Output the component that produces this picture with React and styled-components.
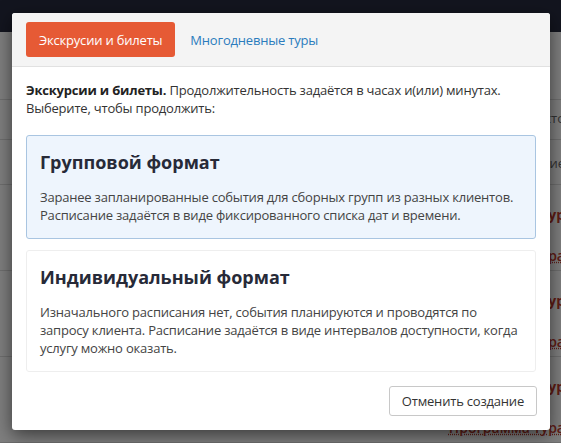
import React from 'react';
import styled, { createGlobalStyle } from 'styled-components';

const GlobalStyle = createGlobalStyle`
  html, body {
    margin: 0;
    padding: 0;
    overflow: hidden;
    font-family: "Open Sans", "Liberation Sans", sans-serif;
  }
  #root {
    height: 443px;
  }
`;

/* the page that sits behind the dialog */
const Page = styled.div`
  position: relative;
  width: 561px;
  height: 443px;
  overflow: hidden;
  background: #fff;
`;

const Nav = styled.div`
  height: 32px;
  background: #272a3e;
`;

const Toolbar = styled.div`
  height: 67px;
  border-bottom: 1px solid #dcdcdc;
`;

const Table = styled.div`
  display: flex;
  flex-direction: column;
`;

const Row = styled.div`
  display: grid;
  grid-template-columns: 1fr 150px;
  align-items: start;
  height: ${(p) => p.$h}px;
  border-bottom: 1px solid #dcdcdc;
  box-sizing: border-box;
`;

const HeadCell = styled.div`
  grid-column: 2;
  padding-top: ${(p) => p.$top}px;
  text-align: right;
  margin-right: -4px;
  font-size: 13px;
  color: #666;
  white-space: nowrap;
`;

const LinkCell = styled.div`
  grid-column: 2;
  display: flex;
  flex-direction: column;
  align-items: flex-end;
  gap: 22px;
  padding-top: 20px;
  margin-right: -4px;
  white-space: nowrap;
`;

const TourName = styled.span`
  font-size: 14px;
  font-weight: 700;
  color: #c0392b;
`;

const TourAction = styled.span`
  font-size: 14px;
  font-weight: 600;
  color: #c0392b;
  text-decoration: underline dotted;
`;

const Overlay = styled.div`
  position: absolute;
  inset: 0;
  background: rgba(0, 0, 0, 0.5);
`;

/* dialog */
const Modal = styled.div`
  position: absolute;
  top: 13px;
  left: 12px;
  width: 538px;
  background: #fff;
  border-radius: 3px;
  box-shadow: 0 5px 18px rgba(0, 0, 0, 0.55);
  overflow: hidden;
  color: #333;
  letter-spacing: -0.2px;
`;

const Header = styled.div`
  display: flex;
  align-items: center;
  gap: 2px;
  padding: 9px 14px;
  background: #f4f4f4;
  border-bottom: 1px solid #e1e1e1;
`;

const Tab = styled.button`
  height: 35px;
  padding: 0 13px;
  border: none;
  border-radius: 3px;
  font-family: inherit;
  font-size: 13px;
  letter-spacing: inherit;
  cursor: pointer;
  background: ${(p) => (p.$active ? '#e65a35' : 'transparent')};
  color: ${(p) => (p.$active ? '#fff' : '#2b7cbd')};
`;

const Body = styled.div`
  display: flex;
  flex-direction: column;
  padding: 14px 14px 14px;
`;

const Intro = styled.p`
  margin: 0 0 18px;
  font-size: 13px;
  line-height: 18px;
  color: #333;

  b {
    color: #222;
    font-weight: 700;
  }
`;

const Card = styled.div`
  padding: 14px 13px;
  border: 1px solid ${(p) => (p.$selected ? '#a9c5e1' : '#eeeeee')};
  border-radius: 3px;
  background: ${(p) => (p.$selected ? '#eef5fd' : '#fff')};
  cursor: pointer;
  & + & {
    margin-top: 11px;
  }
`;

const CardTitle = styled.h3`
  margin: 0 0 14px;
  font-size: 18px;
  line-height: 24px;
  font-weight: 700;
  letter-spacing: 0;
  color: #272a38;
`;

const CardText = styled.p`
  margin: 0;
  font-size: 13px;
  line-height: 18px;
  color: #444;
`;

const Footer = styled.div`
  display: flex;
  justify-content: flex-end;
  padding: 0 13px 14px 14px;
`;

const CancelButton = styled.button`
  height: 30px;
  padding: 0 12px;
  background: #fff;
  border: 1px solid #c8c8c8;
  border-radius: 3px;
  font-family: inherit;
  font-size: 13px;
  letter-spacing: inherit;
  color: #333;
  cursor: pointer;
`;

const rows = [
  { name: 'Групповой тур', action: 'Программа тура' },
  { name: 'Групповой тур', action: 'Программа тура' },
  { name: 'Групповой тур', action: 'Программа тура' },
];

const formats = [
  {
    title: 'Групповой формат',
    text: 'Заранее запланированные события для сборных групп из разных клиентов. Расписание задаётся в виде фиксированного списка дат и времени.',
    selected: true,
  },
  {
    title: 'Индивидуальный формат',
    text: 'Изначального расписания нет, события планируются и проводятся по запросу клиента. Расписание задаётся в виде интервалов доступности, когда услугу можно оказать.',
    selected: false,
  },
];

export default function App() {
  return (
    <>
      <GlobalStyle />
      <Page>
        <Nav />
        <Toolbar />
        <Table>
          <Row $h={40}>
            <HeadCell $top={9}>Маршрут и место</HeadCell>
          </Row>
          <Row $h={45}>
            <HeadCell $top={14}>Наименование</HeadCell>
          </Row>
          {rows.map((r, i) => (
            <Row key={i} $h={86}>
              <LinkCell>
                <TourName>{r.name}</TourName>
                <TourAction>{r.action}</TourAction>
              </LinkCell>
            </Row>
          ))}
        </Table>
        <Overlay />
        <Modal>
          <Header>
            <Tab $active>Экскрусии и билеты</Tab>
            <Tab>Многодневные туры</Tab>
          </Header>
          <Body>
            <Intro>
              <b>Экскурсии и билеты.</b> Продолжительность задаётся в часах и(или) минутах.
              Выберите, чтобы продолжить:
            </Intro>
            {formats.map((f) => (
              <Card key={f.title} $selected={f.selected}>
                <CardTitle>{f.title}</CardTitle>
                <CardText>{f.text}</CardText>
              </Card>
            ))}
          </Body>
          <Footer>
            <CancelButton>Отменить создание</CancelButton>
          </Footer>
        </Modal>
      </Page>
    </>
  );
}
